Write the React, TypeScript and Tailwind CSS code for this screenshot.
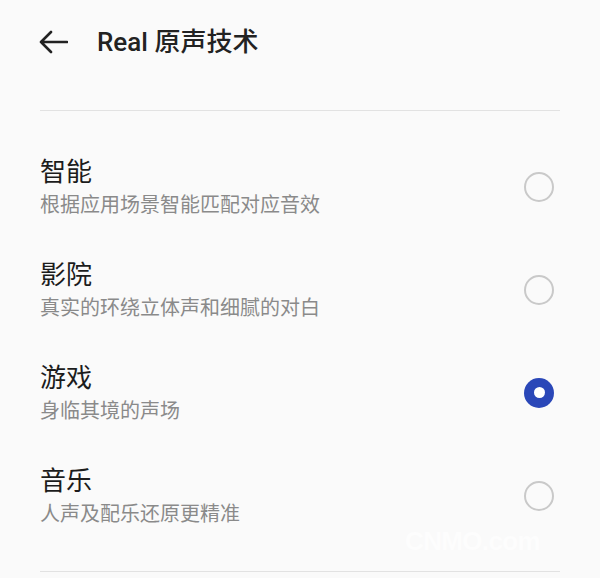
import React, { useState } from 'react';

const options = [
    { key: 'smart', title: '智能', desc: '根据应用场景智能匹配对应音效' },
    { key: 'cinema', title: '影院', desc: '真实的环绕立体声和细腻的对白' },
    { key: 'game', title: '游戏', desc: '身临其境的声场' },
    { key: 'music', title: '音乐', desc: '人声及配乐还原更精准' }
];

const Radio: React.FC<{ checked: boolean }> = ({ checked }) =>
    checked ? (
        <span className="flex items-center justify-center w-[30px] h-[30px] rounded-full bg-[#2a47b8]">
            <span className="w-[11px] h-[11px] rounded-full bg-white" />
        </span>
    ) : (
        <span className="block w-[30px] h-[30px] rounded-full border-2 border-[#c9c9c9]" />
    );

const App: React.FC = () => {
    const [selected, setSelected] = useState('game');

    return (
        <div
            className="relative h-[578px] overflow-hidden bg-[#fafafa] px-[40px]"
            style={{ fontFamily: 'Roboto, "Noto Sans CJK SC", sans-serif' }}
        >
            <header className="flex items-center h-[84px]">
                <svg width="30" height="24" viewBox="0 0 30 24" fill="none" className="-ml-[2px]">
                    <path d="M29 12H3M13 2L3 12l10 10" stroke="#222" strokeWidth="2.6" strokeLinecap="round" strokeLinejoin="round" />
                </svg>
                <h1 className="ml-[29px] text-[26px] font-medium text-[#222]">Real 原声技术</h1>
            </header>

            <div className="mt-[26px] border-t border-[#e2e2e2]" />

            <ul className="mt-[24px]">
                {options.map((item) => (
                    <li
                        key={item.key}
                        onClick={() => setSelected(item.key)}
                        className="flex items-center justify-between h-[103px] pr-[6px] cursor-pointer"
                    >
                        <div className="flex flex-col">
                            <span className="text-[26px] leading-[34px] text-[#1c1c1c]">{item.title}</span>
                            <span className="mt-[2px] text-[20px] leading-[28px] text-[#8a8a8a]">{item.desc}</span>
                        </div>
                        <Radio checked={selected === item.key} />
                    </li>
                ))}
            </ul>

            <div className="mt-[24px] border-t border-[#e2e2e2]" />

            <span
                className="absolute left-[405px] top-[522px] text-[26px] font-bold tracking-tight text-white opacity-70 select-none"
                style={{ fontFamily: '"Liberation Sans Narrow", "Liberation Sans", sans-serif' }}
            >
                CNMO.com
            </span>
        </div>
    );
};

export default App;
